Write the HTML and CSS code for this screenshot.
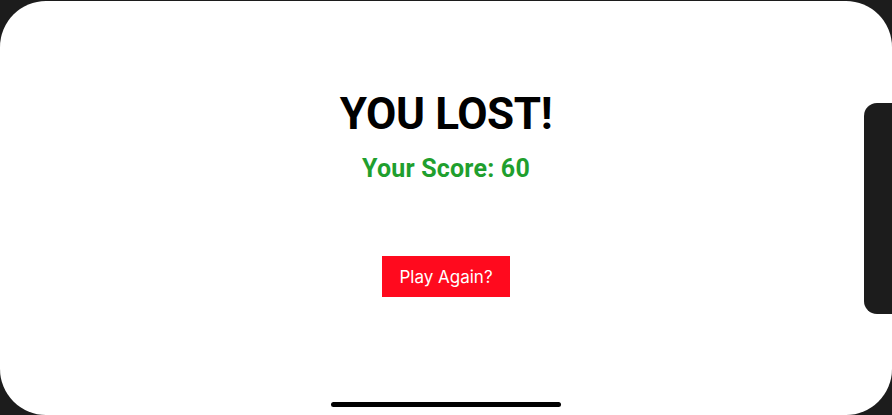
FILE: index.html
```html
<!DOCTYPE html>
<html>
<head>
<meta charset="utf-8">
<link rel="stylesheet" href="styles.css">
</head>
<body>
<div class="device">
  <div class="screen">
    <main class="content">
      <h1 class="title">YOU LOST!</h1>
      <p class="score">Your Score: 60</p>
      <button class="again">Play Again?</button>
    </main>
    <div class="notch"></div>
    <div class="home-indicator"></div>
  </div>
</div>
</body>
</html>
```
FILE: styles.css
```css
html, body {
  margin: 0;
  padding: 0;
  background: #1c1c1c;
}
body {
  width: 892px;
  height: 415px;
  overflow: hidden;
  font-family: Roboto, Inter, "Noto Sans", sans-serif;
}
.device {
  padding-top: 1px;
  height: 414px;
}
.screen {
  position: relative;
  height: 414px;
  background: #ffffff;
  border-radius: 46px;
  overflow: hidden;
}
.content {
  display: flex;
  flex-direction: column;
  align-items: center;
  padding-top: 87px;
}
.title {
  margin: 0;
  font-size: 44px;
  line-height: 52px;
  font-weight: 700;
  letter-spacing: -0.4px;
  color: #000;
}
.score {
  margin: 13px 0 0;
  font-size: 25px;
  line-height: 31px;
  font-weight: 700;
  letter-spacing: 0.2px;
  color: #1f9f2e;
}
.again {
  margin-top: 72px;
  width: 128px;
  height: 41px;
  border: none;
  border-radius: 0;
  background: #ff0a1e;
  color: #fff;
  font-family: Inter, "Noto Sans", sans-serif;
  font-size: 17px;
  font-weight: 400;
  padding: 0;
  cursor: pointer;
}
.notch {
  position: absolute;
  right: 0;
  top: 102px;
  width: 28px;
  height: 211px;
  background: #1c1c1c;
  border-radius: 13px 0 0 13px;
}
.home-indicator {
  position: absolute;
  left: 331px;
  bottom: 8px;
  width: 230px;
  height: 5px;
  border-radius: 3px;
  background: #000;
}
```
